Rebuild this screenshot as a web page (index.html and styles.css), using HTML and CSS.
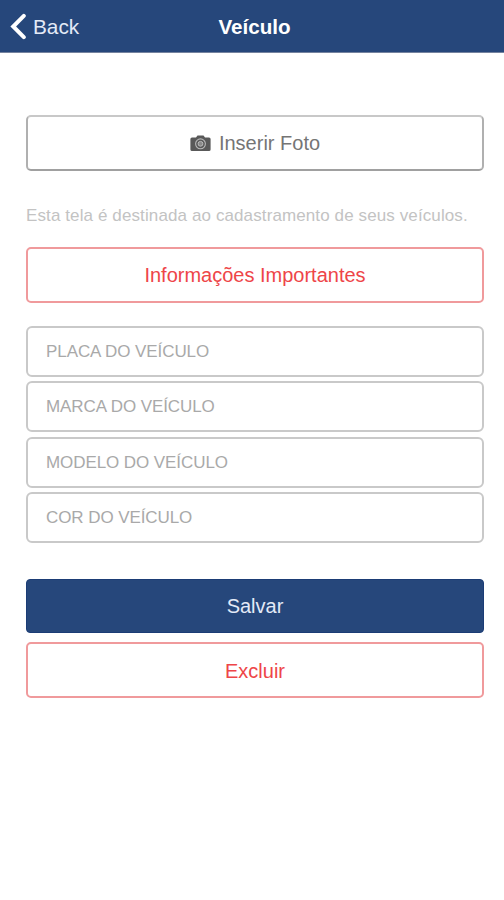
FILE: index.html
```html
<!DOCTYPE html>
<html lang="pt-BR">

<head>
    <meta charset="UTF-8">
    <title>Veículo</title>
    <link rel="stylesheet" href="styles.css">
</head>

<body>
    <header class="navbar">
        <a class="back" href="#">
            <svg class="chevron" width="16" height="28" viewBox="0 0 16 28">
                <path d="M13.8 3.8L3.2 14.5L13.8 25.2" fill="none" stroke="#fff" stroke-width="4" stroke-linecap="round" />
            </svg>
            <span class="back-text">Back</span>
        </a>
        <h1 class="title">Veículo</h1>
    </header>
    <form class="content">
        <button type="button" class="btn btn-photo">
            <svg class="camera" width="21" height="17" viewBox="0 0 21 17">
                <path d="M2 2.5h4L7.5 .6h6L15 2.5h4a1.6 1.6 0 0 1 1.6 1.6v10.3A1.6 1.6 0 0 1 19 16H2A1.6 1.6 0 0 1 .4 14.4V4.1A1.6 1.6 0 0 1 2 2.5z" fill="#595959" />
                <circle cx="10.5" cy="8.8" r="4.9" fill="none" stroke="#b8b8b8" stroke-width="1.1" />
                <circle cx="10.5" cy="8.8" r="2.4" fill="#8a8a8a" stroke="#bbb" stroke-width="1" />
            </svg>
            <span class="photo-text">Inserir Foto</span>
        </button>
        <p class="note">Esta tela é destinada ao cadastramento de seus veículos.</p>
        <button type="button" class="btn btn-red">Informações Importantes</button>
        <div class="fields">
            <input class="field" type="text" placeholder="PLACA DO VEÍCULO">
            <input class="field" type="text" placeholder="MARCA DO VEÍCULO">
            <input class="field" type="text" placeholder="MODELO DO VEÍCULO">
            <input class="field" type="text" placeholder="COR DO VEÍCULO">
        </div>
        <button type="button" class="btn btn-save">Salvar</button>
        <button type="button" class="btn btn-red btn-delete">Excluir</button>
    </form>
</body>

</html>
```
FILE: styles.css
```css
* {
    box-sizing: border-box;
}

body {
    margin: 0;
    background: #fff;
    font-family: "Liberation Sans", Arial, sans-serif;
}

/* barra superior */
.navbar {
    display: grid;
    grid-template-columns: 1fr auto 1fr;
    align-items: center;
    height: 53px;
    padding: 0 10px;
    background: #26477b;
    border-bottom: 1px solid #75839f;
    color: #fff;
}

.back {
    display: flex;
    align-items: center;
    gap: 7px;
    color: #e3eaf7;
    font-size: 20.8px;
    text-decoration: none;
}

.back-text {
    padding-top: 1px;
}

.chevron {
    display: block;
}

.title {
    margin: 0;
    padding: 1px 0 0 5px;
    font-size: 20.6px;
    font-weight: bold;
}

.content {
    display: flex;
    flex-direction: column;
    padding: 62px 20px 0 26px;
}

.btn {
    display: flex;
    align-items: center;
    justify-content: center;
    width: 100%;
    height: 56px;
    padding: 0;
    border: 2px solid;
    border-radius: 5px;
    background: #fff;
    font-family: inherit;
    font-size: 20px;
}

.btn-photo {
    gap: 8px;
    border-color: #c8c8c8 #b0b0b0 #a0a0a0;
    color: #757575;
}

.note {
    margin: 33px 0 19px;
    color: #c3c3c3;
    font-size: 17px;
    line-height: 24px;
    letter-spacing: .11px;
    white-space: nowrap;
}

.btn-red {
    border-color: #f09a9c;
    color: #ee4548;
}

.btn-delete {
    padding-top: 2px;
}

/* campos do veículo */
.fields {
    display: grid;
    gap: 4.4px;
    margin: 23px 0 36px;
}

.field {
    width: 100%;
    height: 51px;
    padding: 1px 18px 0;
    border: 2px solid #c9c9c9;
    border-radius: 6px;
    background: #fff;
    font-family: inherit;
    font-size: 17px;
    letter-spacing: -.08px;
}

.field::placeholder {
    color: #a9a9a9;
}

.btn-save {
    height: 54px;
    margin-bottom: 9px;
    padding-top: 1px;
    border: 1px solid #1b3c75;
    border-radius: 4px;
    background: #26477b;
    color: #e3eaf7;
}
```
